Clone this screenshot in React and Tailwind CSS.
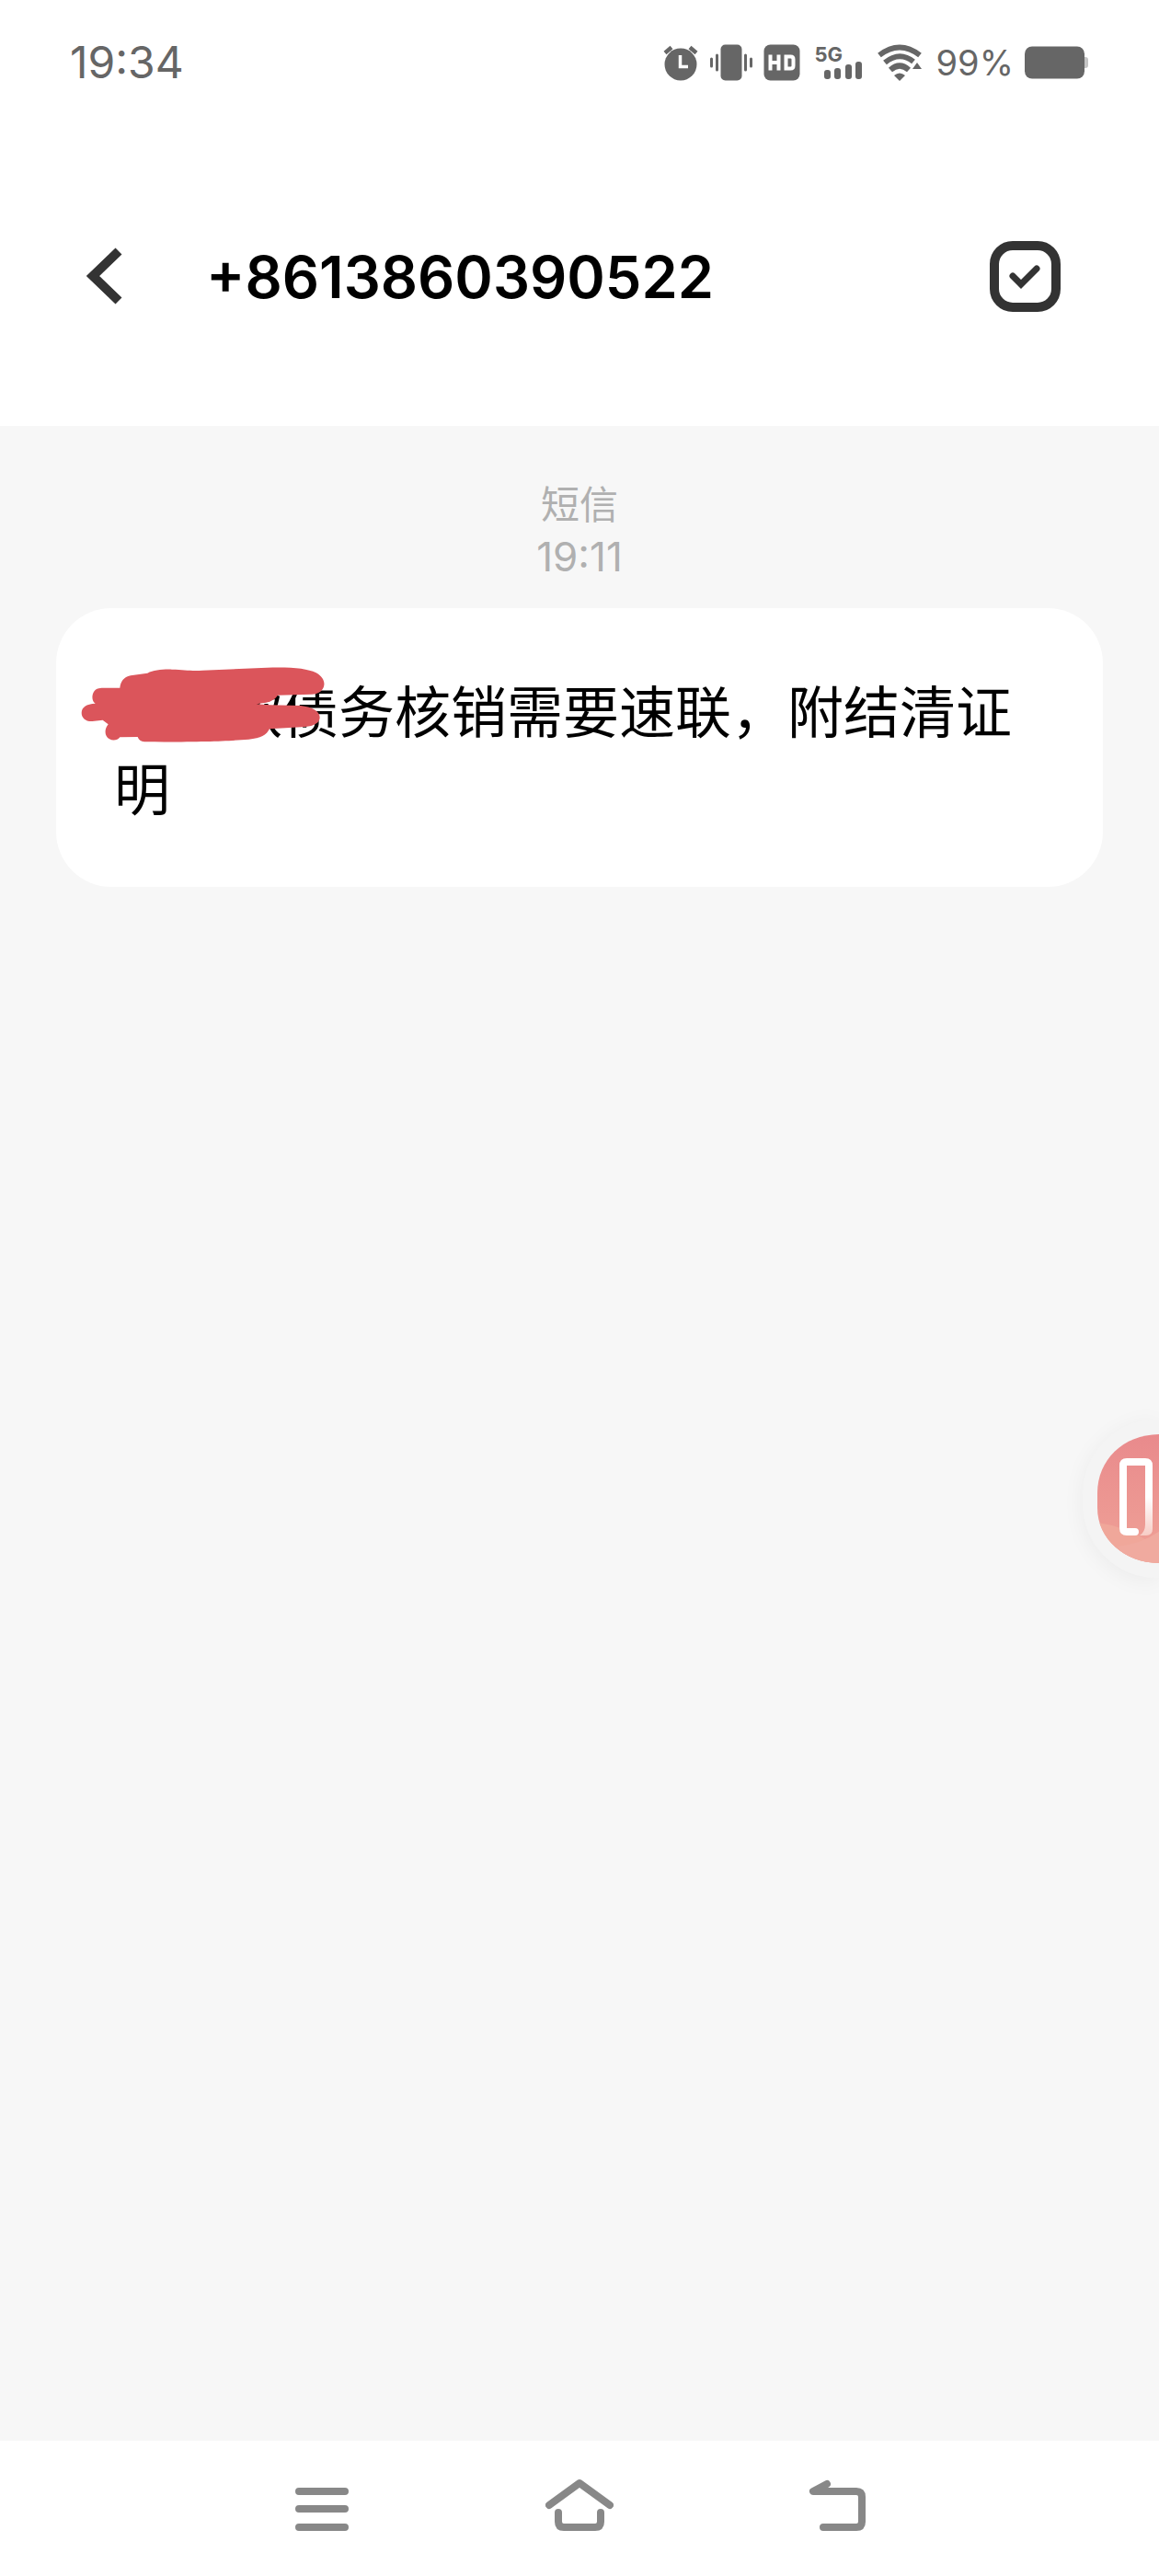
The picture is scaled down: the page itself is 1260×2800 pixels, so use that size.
import React from "react";

const message = {
	sender: "+8613860390522",
	type: "短信",
	time: "19:11",
	body: "\u3000\u3000款债务核销需要速联，附结清证明",
};

const AlarmIcon = () => (
	<svg width="40" height="40" viewBox="0 0 40 40" fill="#666666">
		<circle cx="20" cy="22" r="17.5" />
		<path d="M3 9.5 10 3.500M37 9.500 30 3.500" stroke="#666666" strokeWidth="4.500" />
		<path d="M19.5 12v12.5H28" fill="none" stroke="#ffffff" strokeWidth="3.5" />
	</svg>
);

const VibrateIcon = () => (
	<svg width="46" height="40" viewBox="0 0 46 40" fill="none" stroke="#666666" strokeWidth="3" strokeLinecap="round">
		<rect x="11.5" y="0.5" width="23" height="39" rx="5" fill="#666666" stroke="none" />
		<path d="M1.5 16v8M7.5 12v16M38.5 12v16M44.5 16v8" />
	</svg>
);

const HdIcon = () => (
	<svg width="40" height="40" viewBox="0 0 40 40">
		<rect x="0.5" y="0.5" width="39" height="39" rx="7" fill="#666666" />
		<path d="M7.500 11.500v17M16.500 11.500v17M7.500 20h9" fill="none" stroke="#ffffff" strokeWidth="4" />
		<path d="M24.500 13.500h5q3 0 3 3v7q0 3-3 3h-5z" fill="none" stroke="#ffffff" strokeWidth="4" />
	</svg>
);

const SignalIcon = () => (
	<div className="relative h-10 w-[52px]">
		<span className="block text-[22px] leading-[22px] font-bold">5G</span>
		<svg className="absolute right-0 bottom-0" width="42" height="21" viewBox="0 0 42 21" fill="#666666">
			<rect x="0" y="9" width="7" height="10" rx="3" />
			<rect x="11" y="7" width="7" height="12" rx="3" />
			<rect x="23" y="3" width="7" height="16" rx="3" />
			<rect x="34" y="0" width="7" height="19" rx="3" />
		</svg>
	</div>
);

const WifiIcon = () => (
	<svg width="48" height="40" viewBox="0 0 48 40" fill="none" stroke="#666666">
		<path d="M2 12Q24-5 46 12" strokeWidth="6" />
		<path d="M8 20Q24 7 39 19" strokeWidth="6" />
		<path d="M14 28Q24 19 34 28" strokeWidth="6" />
		<path d="M18 34q6-5 12 0l-6 6z" fill="#666666" stroke="none" />
		<path d="M43 20l5 7H38z" fill="#666666" stroke="none" />
	</svg>
);

const BatteryIcon = () => (
	<svg width="70" height="36" viewBox="0 0 70 36">
		<rect x="62" y="12" width="7" height="12" rx="3" fill="#c4c4c4" />
		<rect x="0" y="0.5" width="65" height="35" rx="8" fill="#666666" />
	</svg>
);

const StatusBar = () => (
	<div className="flex h-[136px] items-center justify-between px-[76px] text-[#666666]">
		<span className="text-[48px] leading-none">19:34</span>
		<div className="flex items-center gap-4">
			<div className="flex items-center gap-3">
				<AlarmIcon />
				<VibrateIcon />
				<HdIcon />
			</div>
			<SignalIcon />
			<WifiIcon />
			<div className="flex items-center gap-3">
				<span className="text-[38px] leading-none">99%</span>
				<BatteryIcon />
			</div>
		</div>
	</div>
);

const ChatHeader = ({ title = message.sender }) => (
	<header className="flex h-[327px] items-center pr-[107px] pl-[92px]">
		<button type="button" aria-label="返回" className="mr-[90px]">
			<svg width="42" height="64" viewBox="0 0 42 64" fill="none" stroke="#333333" strokeWidth="10">
				<path d="M37 5 9 32l28 27" />
			</svg>
		</button>
		<h1 className="grow pt-1 text-[63px] leading-none font-semibold text-black">{title}</h1>
		<button type="button" aria-label="选择">
			<svg width="78" height="78" viewBox="0 0 78 78" fill="none" stroke="#333333">
				<rect x="6" y="6" width="67" height="67" rx="20" strokeWidth="10" />
				<path d="M26 39l9 9L52 31" strokeWidth="7" strokeLinecap="round" />
			</svg>
		</button>
	</header>
);

// hand-drawn strokes hiding the start of the message
const Scribble = () => (
	<svg className="absolute top-[62px] left-[26px]" width="267" height="86" viewBox="110 220 801 258" fill="#db555b">
		<path d="M330 246C350 236 380 233 410 234C450 234 470 240 510 237L720 228C800 226 850 230 880 245C900 256 908 272 906 285C903 303 888 314 865 315L755 318C745 332 730 342 705 344L685 347L730 350L830 352C865 356 892 370 892 390C892 408 872 418 845 421L728 428C718 448 700 458 660 462C590 468 500 471 320 470C308 469 302 464 298 454L240 455C232 465 218 468 206 461C190 452 188 430 202 413L184 399L150 403C128 404 115 392 115 375C115 358 130 346 160 345C148 338 148 318 155 307C162 296 172 294 185 294L240 294C242 275 252 258 275 254Z" />
	</svg>
);

const MessageBubble = ({ body = message.body }) => (
	<div className="relative mx-[61px] rounded-[60px] bg-white pt-[72px] pr-[56px] pb-[63px] pl-[63px]">
		<p className="text-[61px] leading-[84px] text-black">{body}</p>
		<Scribble />
	</div>
);

const FloatingButton = () => (
	<button type="button" aria-label="悬浮球" className="absolute top-[1543px] right-0 h-[172px] w-[83px] overflow-hidden rounded-l-[80px] bg-[#f4f4f4] pl-4 shadow-[0_4px_24px_rgba(0,0,0,0.05)]">
		<svg width="68" height="140" viewBox="0 0 68 140">
			<defs>
				<linearGradient id="ball" x1="0" y1="0" x2="0" y2="1">
					<stop offset="0" stopColor="#e98a8c" />
					<stop offset="1" stopColor="#efa297" />
				</linearGradient>
				<linearGradient id="tail" x1="0" y1="26" x2="0" y2="110" gradientUnits="userSpaceOnUse">
					<stop offset="0.5" stopColor="#ffffff" />
					<stop offset="1" stopColor="#f7cdc6" />
				</linearGradient>
				<clipPath id="ballClip">
					<path d="M68 0C28 0 0 28 0 64V80C0 114 30 140 68 140Z" />
				</clipPath>
			</defs>
			<g clipPath="url(#ballClip)">
				<rect width="68" height="140" fill="url(#ball)" />
				<path d="M0 96Q28 100 52 114L68 121V140H0z" fill="#f0a79a" />
				<path d="M22 122Q48 119 68 105V140H30z" fill="#f0aa9f" />
			</g>
			<path d="M52 34v64q0 8-6 12h7q7 0 7-7V34z" fill="url(#tail)" />
			<path d="M41 106h-9q-4 0-4-4V34q0-4 4-4h20q4 0 4 4v14" fill="none" stroke="#ffffff" strokeWidth="8" strokeLinecap="round" />
		</svg>
	</button>
);

const NavBar = () => (
	<nav className="flex h-[147px] items-center justify-center gap-[200px] bg-white pb-2">
		<button type="button" aria-label="最近任务" className="flex w-20 justify-center">
			<svg width="60" height="64" viewBox="0 0 60 64" stroke="#888888" strokeWidth="8" strokeLinecap="round">
				<path d="M5 17h50M5 36h50M5 56h50" />
			</svg>
		</button>
		<button type="button" aria-label="主屏幕" className="flex w-20 justify-center">
			<svg width="74" height="64" viewBox="0 0 74 64" fill="none" stroke="#888888" strokeWidth="8" strokeLinecap="round" strokeLinejoin="round">
				<path d="M4 32 37 8l33 24" />
				<path d="M14 40v10q0 6 6 6h34q6 0 6-6V40" />
			</svg>
		</button>
		<button type="button" aria-label="返回" className="flex w-20 justify-center">
			<svg width="64" height="64" viewBox="0 0 64 64" fill="none" stroke="#888888" strokeWidth="8" strokeLinecap="round" strokeLinejoin="round">
				<path d="M21 9 6 17h47q6 0 6 6v27q0 6-6 6H17" />
			</svg>
		</button>
	</nav>
);

const App = () => (
	<div className="relative flex min-h-screen flex-col overflow-hidden bg-[#f7f7f7] font-['Inter','Noto_Sans_CJK_SC',sans-serif]">
		<div className="bg-white">
			<StatusBar />
			<ChatHeader />
		</div>
		<main className="grow pt-[58px]">
			<div className="mb-[28px] text-center leading-[56px] text-[#b0b0b0]">
				<div className="text-[42px]">{message.type}</div>
				<div className="text-[44px]">{message.time}</div>
			</div>
			<MessageBubble />
		</main>
		<NavBar />
		<FloatingButton />
	</div>
);

export default App;
